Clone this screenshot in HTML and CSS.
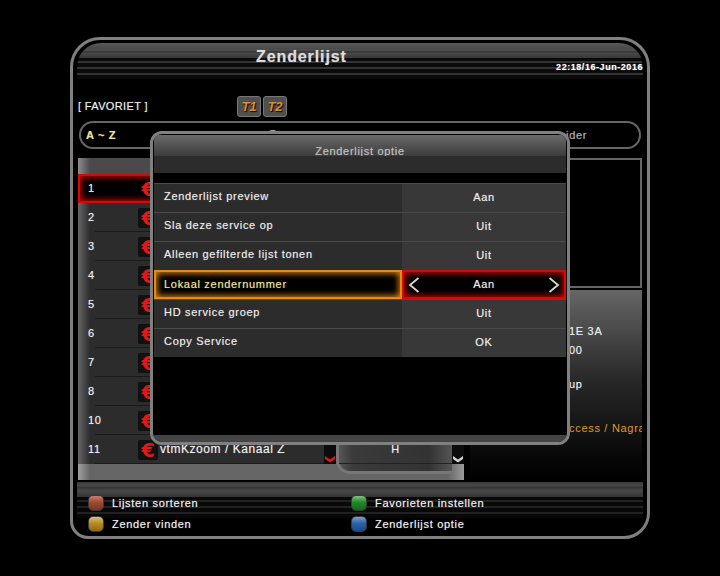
FILE: index.html
```html
<!DOCTYPE html>
<html lang="nl">
<head>
  <meta charset="UTF-8">
  <title>Zenderlijst</title>
  <link rel="stylesheet" href="styles.css">
</head>
<body>
  <div class="screen">
    <div class="head">
      <div class="title">Zenderlijst</div>
      <div class="clock">22:18/16-Jun-2016</div>
    </div>

    <div class="fav-row">
      <div class="fav-name">[ FAVORIET ]</div>
      <div class="badge">T1</div>
      <div class="badge">T2</div>
    </div>

    <div class="tabs">
      <span class="tab tab-on">A ~ Z</span>
      <span class="tab tab-mid">S</span>
      <span class="tab tab-end">ider</span>
    </div>

    <div class="main">
      <div class="list">
        <div class="list-main">
          <div class="list-head"></div>
          <div class="rows-wrap">
            <div class="rows">
              <div class="row row-on"><span class="num">1</span><span class="logo">€</span></div>
              <div class="row"><span class="num">2</span><span class="logo">€</span></div>
              <div class="row"><span class="num">3</span><span class="logo">€</span></div>
              <div class="row"><span class="num">4</span><span class="logo">€</span></div>
              <div class="row"><span class="num">5</span><span class="logo">€</span></div>
              <div class="row"><span class="num">6</span><span class="logo">€</span></div>
              <div class="row"><span class="num">7</span><span class="logo">€</span></div>
              <div class="row"><span class="num">8</span><span class="logo">€</span></div>
              <div class="row"><span class="num">10</span><span class="logo">€</span></div>
              <div class="row"><span class="num">11</span><span class="logo">€</span><span class="name">vtmKzoom / Kanaal Z</span></div>
            </div>
            <div class="scroll">
              <svg class="chev" width="10" height="8" viewBox="0 0 10 8"><path d="M0 1l5 3.5L10 1v3L5 7.5 0 4z" fill="#e01818"/></svg>
            </div>
          </div>
        </div>
        <div class="list-sub">
          <div class="sub-panel">
            <div class="sub-row">H</div>
          </div>
          <div class="scroll scroll-sub">
            <svg class="chev" width="10" height="8" viewBox="0 0 10 8"><path d="M0 1l5 3.5L10 1v3L5 7.5 0 4z" fill="#cfcfcf"/></svg>
          </div>
        </div>
      </div>

      <div class="side">
        <div class="preview"></div>
        <div class="info">
          <div class="info-line info-sat">1E 3A</div>
          <div class="info-line info-freq">00</div>
          <div class="info-line info-grp">up</div>
          <div class="info-line info-ca">ccess / Nagra</div>
        </div>
      </div>
    </div>

    <div class="foot">
      <div class="key"><span class="led led-red"></span>Lijsten sorteren</div>
      <div class="key"><span class="led led-green"></span>Favorieten instellen</div>
      <div class="key"><span class="led led-yellow"></span>Zender vinden</div>
      <div class="key"><span class="led led-blue"></span>Zenderlijst optie</div>
    </div>

    <!-- popup -->
    <div class="dialog">
      <div class="dlg-title">Zenderlijst optie</div>
      <div class="dlg-sub"></div>
      <div class="dlg-rows">
        <div class="opt"><div class="opt-label">Zenderlijst preview</div><div class="opt-val">Aan</div></div>
        <div class="opt"><div class="opt-label">Sla deze service op</div><div class="opt-val">Uit</div></div>
        <div class="opt"><div class="opt-label">Alleen gefilterde lijst tonen</div><div class="opt-val">Uit</div></div>
        <div class="opt opt-on">
          <div class="opt-label">Lokaal zendernummer</div>
          <div class="opt-val">
            <svg width="12" height="16" viewBox="0 0 12 16"><path d="M10.5 1L2 8l8.5 7" fill="none" stroke="#d8d8d8" stroke-width="1.8"/></svg>
            <span>Aan</span>
            <svg width="12" height="16" viewBox="0 0 12 16"><path d="M1.5 1L10 8l-8.5 7" fill="none" stroke="#d8d8d8" stroke-width="1.8"/></svg>
          </div>
        </div>
        <div class="opt"><div class="opt-label">HD service groep</div><div class="opt-val">Uit</div></div>
        <div class="opt"><div class="opt-label">Copy Service</div><div class="opt-val">OK</div></div>
      </div>
      <div class="dlg-bottom"></div>
    </div>
  </div>
</body>
</html>
```

FILE: styles.css
```css
* {
  box-sizing: border-box;
}
body {
  margin: 0;
  padding: 37px 70px 0;
  background: #000;
  font-family: "Liberation Sans", Arial, sans-serif;
  font-size: 11px;
  letter-spacing: 0.7px;
  color: #ececec;
  text-shadow: 0 0 1px rgba(255, 255, 255, 0.45);
}
.screen {
  position: relative;
  width: 580px;
  height: 502px;
  padding: 3px 4px 0;
  border: 3px solid #808080;
  border-radius: 30px 30px 26px 18px;
  overflow: hidden;
}

/* header */
.head {
  display: flex;
  height: 36px;
  padding-left: 179px;
  border-radius: 24px 24px 0 0;
  background:
    linear-gradient(to bottom, #5a5a5a, #484848 6px, #555 7px, #333 9px, #4a4a4a 10px, #3a3a3a 14px) 0 0 / 100% 15px no-repeat,
    repeating-linear-gradient(to bottom, #333 0, #333 2px, #0a0a0a 2px, #0a0a0a 6px);
}
.title {
  margin-top: 5px;
  font-size: 16px;
  line-height: 18px;
  font-weight: bold;
  letter-spacing: 0.9px;
  color: #dcdcdc;
}
.clock {
  margin-left: auto;
  margin-top: 18px;
  font-size: 9px;
  line-height: 12px;
  font-weight: bold;
  letter-spacing: 0.55px;
  color: #fff;
}

/* favourite row */
.fav-row {
  display: flex;
  align-items: center;
  height: 21px;
  margin-top: 17px;
  padding-left: 1px;
}
.fav-name {
  width: 159px;
  margin-bottom: 2px;
  letter-spacing: 0.35px;
}
.badge {
  width: 24px;
  height: 21px;
  margin-right: 2px;
  border: 1px solid #777;
  border-radius: 3px;
  background: #4f4f4f;
  color: #e08a20;
  font-size: 13px;
  line-height: 19px;
  font-weight: bold;
  font-style: italic;
  letter-spacing: 0;
  text-align: center;
  text-shadow: 1px 1px 1px #000;
}

/* tab pill */
.tabs {
  display: flex;
  align-items: center;
  height: 28px;
  margin: 4px 2px 0;
  padding-left: 5px;
  border: 2px solid #666;
  border-radius: 14px;
}
.tab {
  color: #a8a8a8;
}
.tab-on {
  color: #f0e58c;
  font-weight: bold;
  width: 182px;
}
.tab-mid {
  width: 298px;
  font-size: 14px;
}

/* main area */
.main {
  display: flex;
  justify-content: space-between;
  height: 324px;
  margin-top: 9px;
  padding: 0 1px;
}
.list {
  display: flex;
  width: 386px;
  height: 322px;
  background: linear-gradient(to right, #a0a0a0, #666 12px, #666 370px, #999);
}
.list-main {
  width: 258px;
}
.list-head {
  height: 16px;
  background: linear-gradient(to right, #8c8c8c, #4a4a4a 12px);
}
.rows-wrap {
  display: flex;
  height: 290px;
}
.rows {
  width: 246px;
  background: linear-gradient(to right, #666, #2c2c2c 12px);
}
.row {
  display: flex;
  align-items: center;
  height: 29px;
  padding-left: 10px;
  background: linear-gradient(#1a1a1a, #1a1a1a) 17px 100% / 100% 1px no-repeat;
}
.row-on {
  background: #000;
  border: 2px solid #d80808;
  padding-left: 8px;
  box-shadow: inset 0 0 6px 1px #d80808;
}
.num {
  width: 50px;
  margin-bottom: 2px;
  color: #f0f0f0;
}
.logo {
  width: 20px;
  height: 20px;
  border-radius: 2px;
  background: #111;
  color: #e01818;
  font-family: "DejaVu Sans", sans-serif;
  font-size: 19px;
  line-height: 20px;
  font-weight: bold;
  letter-spacing: 0;
  text-align: center;
  text-shadow: none;
}
.row-on .logo {
  background: none;
}
.name {
  margin-left: 2px;
  margin-bottom: 2px;
  font-size: 12px;
  letter-spacing: 0.55px;
  color: #eee;
}
.scroll {
  display: flex;
  align-items: flex-end;
  justify-content: center;
  width: 12px;
  padding-bottom: 1px;
  background: #0c0c0c;
}
.list-sub {
  display: flex;
  width: 128px;
}
.sub-panel {
  display: flex;
  flex-direction: column;
  justify-content: flex-end;
  width: 116px;
  height: 316px;
  padding-bottom: 7px;
  border-left: 3px solid #777;
  border-bottom: 3px solid #777;
  border-bottom-left-radius: 14px;
  background: linear-gradient(to right, #555, #3a3a3a 14px, #333 90px, #555);
}
.sub-row {
  height: 29px;
  border-bottom: 1px solid #222;
  color: #f0f0f0;
  line-height: 28px;
  text-align: center;
}
.scroll-sub {
  height: 290px;
  margin-top: 16px;
}

/* right column */
.side {
  width: 172px;
}
.preview {
  height: 130px;
  border: 2px solid #666;
}
.info {
  height: 192px;
  margin-top: 2px;
  padding: 35px 0 0 99px;
  background: linear-gradient(to bottom, #666, #2a2a2a 45%, #090909 85%, #000);
  overflow: hidden;
  font-size: 11px;
}
.info-line {
  height: 13px;
  line-height: 13px;
  white-space: nowrap;
}
.info-freq {
  margin-top: 6px;
}
.info-grp {
  margin-top: 21px;
}
.info-ca {
  margin-top: 31px;
  color: #e09a2a;
  text-shadow: none;
}

/* colour keys */
.foot {
  display: grid;
  grid-template-columns: 263px 1fr;
  grid-auto-rows: 17px;
  row-gap: 4px;
  height: 56px;
  padding: 12px 0 0 11px;
  background:
    linear-gradient(to bottom, #3a3a3a, #4a4a4a 4px, #333 5px, #484848 9px, #333 15px) 0 0 / 100% 15px no-repeat,
    repeating-linear-gradient(to bottom, #222 0, #222 2px, #080808 2px, #080808 6px) 0 0 / 100% 36px no-repeat;
}
.key {
  display: flex;
  align-items: center;
  height: 17px;
  color: #f2f2f2;
}
.led {
  width: 16px;
  height: 16px;
  margin-right: 8px;
  border: 1px solid #3a3a3a;
  border-radius: 5px;
}
.led-red {
  background: linear-gradient(to bottom, #c88070, #a04a30 45%, #7e3422);
}
.led-green {
  background: linear-gradient(to bottom, #80c080, #1e8a28 45%, #116a1c);
}
.led-yellow {
  background: linear-gradient(to bottom, #d8c080, #b88a24 45%, #8e6a16);
}
.led-blue {
  background: linear-gradient(to bottom, #80a0d0, #2a62a8 45%, #1a4a88);
}

/* popup */
.dialog {
  position: absolute;
  left: 77px;
  top: 91px;
  display: flex;
  flex-direction: column;
  width: 420px;
  height: 314px;
  padding: 1px 1px 0;
  border: 3px solid #808080;
  border-radius: 12px;
  background: #000;
  overflow: hidden;
}
.dlg-title {
  height: 21px;
  line-height: 33px;
  text-align: center;
  color: #bbb;
  background: linear-gradient(to bottom, #6a6a6a, #3c3c3c);
}
.dlg-sub {
  height: 17px;
  background: #2c2c2c;
}
.dlg-rows {
  flex: 1;
  margin-top: 10px;
}
.opt {
  display: flex;
  height: 29px;
  line-height: 27px;
}
.opt-label {
  width: 248px;
  padding-left: 10px;
  border-top: 1px solid #4a4a4a;
  background: #2c2c2c;
  color: #ececec;
  line-height: 25px;
}
.opt-val {
  width: 164px;
  border-top: 1px solid #4a4a4a;
  background: #383838;
  color: #ececec;
  text-align: center;
}
.opt-on .opt-label {
  border: 2px solid #e88a10;
  padding-left: 8px;
  background: #000;
  box-shadow: inset 0 0 6px 1px #e88a10;
  color: #f0e58c;
  line-height: 25px;
}
.opt-on .opt-val {
  display: flex;
  align-items: center;
  justify-content: space-between;
  padding: 0 4px;
  border: 2px solid #d80808;
  background: #000;
  box-shadow: inset 0 0 6px 1px #d80808;
}
.dlg-bottom {
  height: 7px;
  margin: 0 -1px;
  background: #444;
}
```
